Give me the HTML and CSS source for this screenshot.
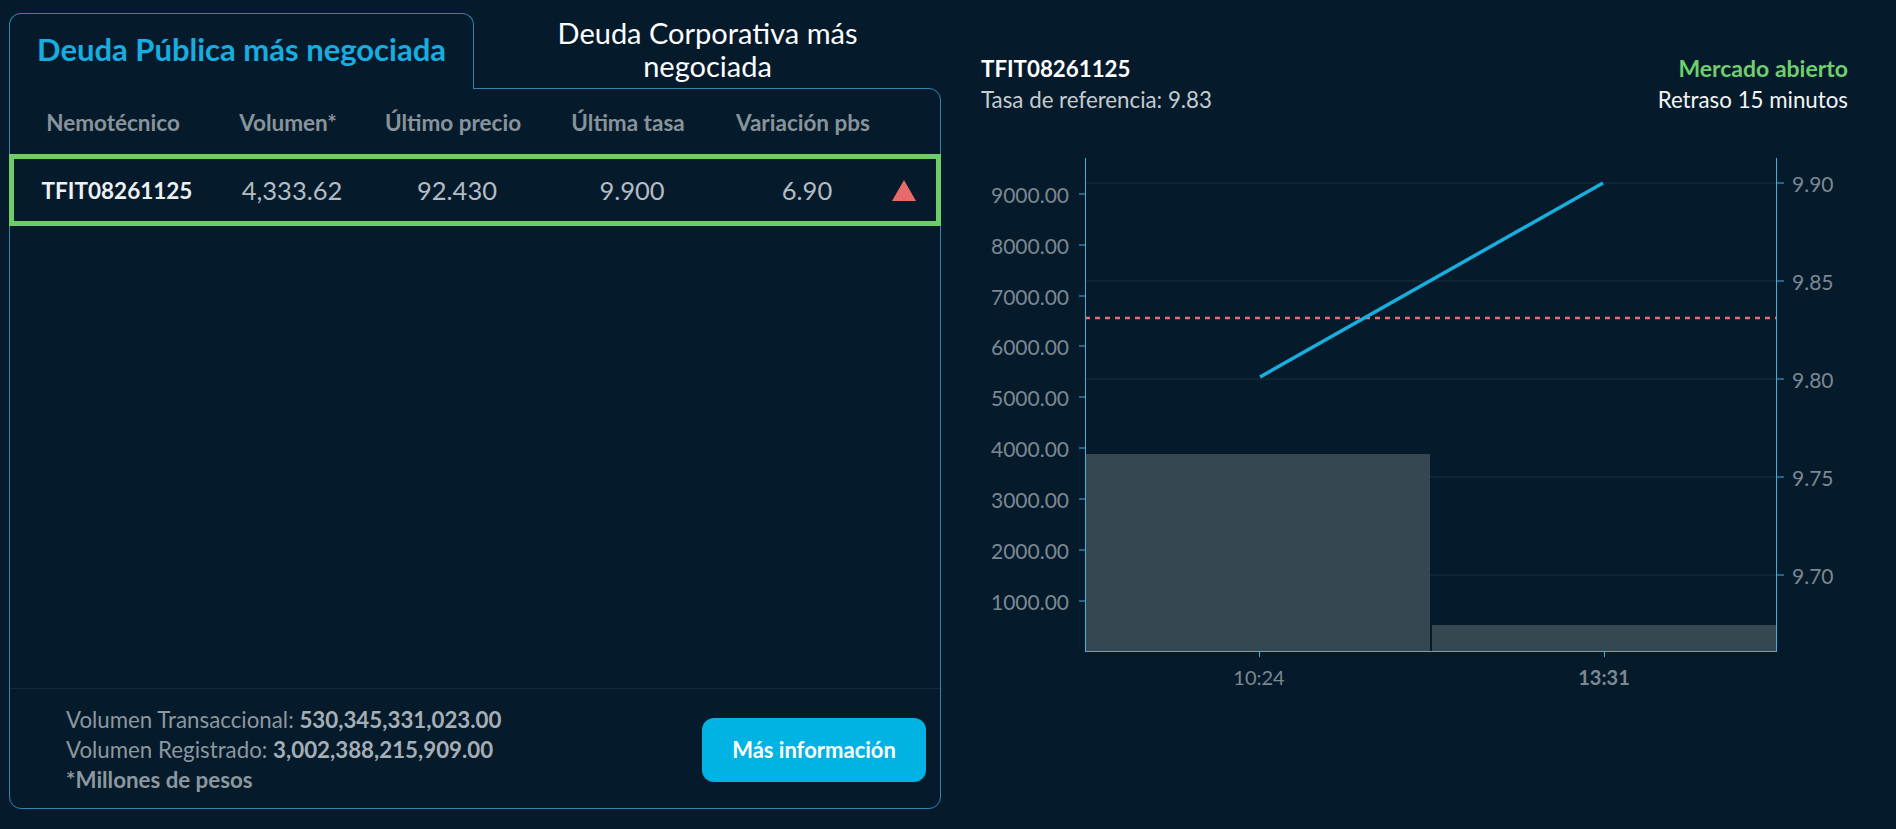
FILE: index.html
```html
<!DOCTYPE html>
<html lang="es">
<head>
<meta charset="utf-8">
<title>Deuda más negociada</title>
<link rel="stylesheet" href="styles.css">
</head>
<body>
<div class="page">
  <section class="panel">
    <div class="tabs">
      <div class="tab tab-active">Deuda Pública más negociada</div>
      <div class="tab tab-inactive">Deuda Corporativa más<br>negociada</div>
    </div>
    <div class="panel-body">
      <div class="grid head">
        <div>Nemotécnico</div>
        <div>Volumen*</div>
        <div>Último precio</div>
        <div>Última tasa</div>
        <div>Variación pbs</div>
        <div></div>
      </div>
      <div class="grid row selected">
        <div class="code">TFIT08261125</div>
        <div>4,333.62</div>
        <div>92.430</div>
        <div>9.900</div>
        <div>6.90</div>
        <div class="trend"><span class="tri-up"></span></div>
      </div>
      <div class="spacer"></div>
      <div class="footer">
        <div class="totals">
          <div>Volumen Transaccional: <b>530,345,331,023.00</b></div>
          <div>Volumen Registrado: <b>3,002,388,215,909.00</b></div>
          <div class="note">*Millones de pesos</div>
        </div>
        <button class="btn">Más información</button>
      </div>
    </div>
  </section>

  <section class="detail">
    <div class="detail-head">
      <div>
        <div class="d-code">TFIT08261125</div>
        <div class="d-ref">Tasa de referencia: 9.83</div>
      </div>
      <div class="d-right">
        <div class="d-open">Mercado abierto</div>
        <div class="d-delay">Retraso 15 minutos</div>
      </div>
    </div>
    <svg class="chart" width="867" height="560" viewBox="0 0 867 560">
      <g class="grid-lines">
        <line x1="104" y1="44" x2="796" y2="44"/>
        <line x1="104" y1="142" x2="796" y2="142"/>
        <line x1="104" y1="240" x2="796" y2="240"/>
        <line x1="104" y1="338" x2="796" y2="338"/>
        <line x1="104" y1="436" x2="796" y2="436"/>
      </g>
      <rect class="bar" x="104" y="315" width="345" height="197"/>
      <rect class="bar" x="451" y="486" width="345" height="26"/>
      <line class="ref" x1="104" y1="179" x2="796" y2="179"/>
      <line class="rate" x1="279" y1="238" x2="622" y2="44"/>
      <g class="axis">
        <line x1="104.5" y1="19" x2="104.5" y2="512"/>
        <line x1="795.5" y1="19" x2="795.5" y2="512"/>
        <line x1="104" y1="512.5" x2="796" y2="512.5"/>
        <line x1="98" y1="55" x2="104" y2="55"/>
        <line x1="98" y1="106" x2="104" y2="106"/>
        <line x1="98" y1="157" x2="104" y2="157"/>
        <line x1="98" y1="207" x2="104" y2="207"/>
        <line x1="98" y1="258" x2="104" y2="258"/>
        <line x1="98" y1="309" x2="104" y2="309"/>
        <line x1="98" y1="360" x2="104" y2="360"/>
        <line x1="98" y1="411" x2="104" y2="411"/>
        <line x1="98" y1="462" x2="104" y2="462"/>
        <line x1="796" y1="44" x2="803" y2="44"/>
        <line x1="796" y1="142" x2="803" y2="142"/>
        <line x1="796" y1="240" x2="803" y2="240"/>
        <line x1="796" y1="338" x2="803" y2="338"/>
        <line x1="796" y1="436" x2="803" y2="436"/>
        <line x1="278.5" y1="512" x2="278.5" y2="518"/>
        <line x1="623.5" y1="512" x2="623.5" y2="518"/>
      </g>
      <g class="ylabels">
        <text x="88" y="55">9000.00</text>
        <text x="88" y="106">8000.00</text>
        <text x="88" y="157">7000.00</text>
        <text x="88" y="207">6000.00</text>
        <text x="88" y="258">5000.00</text>
        <text x="88" y="309">4000.00</text>
        <text x="88" y="360">3000.00</text>
        <text x="88" y="411">2000.00</text>
        <text x="88" y="462">1000.00</text>
      </g>
      <g class="rlabels">
        <text x="811" y="44">9.90</text>
        <text x="811" y="142">9.85</text>
        <text x="811" y="240">9.80</text>
        <text x="811" y="338">9.75</text>
        <text x="811" y="436">9.70</text>
      </g>
      <g class="xlabels">
        <text x="278" y="538">10:24</text>
        <text class="xbold" x="623" y="538">13:31</text>
      </g>
    </svg>
  </section>
</div>
</body>
</html>
```
FILE: styles.css
```css
* { box-sizing: border-box; }
html, body {
  margin: 0;
  background: #051b2b;
}
body {
  font-family: "Lato", "Noto Sans", "Liberation Sans", sans-serif;
  color: #e9edf0;
}
.page {
  display: flex;
  align-items: flex-start;
  gap: 40px;
  padding: 13px 0 0 9px;
}

/* ---------- left panel ---------- */
.panel {
  width: 932px;
  height: 796px;
  display: flex;
  flex-direction: column;
}
.tabs {
  display: flex;
  height: 75px;
}
.tab {
  display: flex;
  align-items: center;
  justify-content: center;
}
.tab-active {
  width: 465px;
  border: 1px solid #2f86b3;
  border-bottom: none;
  border-radius: 12px 12px 0 0;
  background: #051b2b;
  color: #18ade0;
  font-size: 31px;
  font-weight: 700;
  position: relative;
  z-index: 1;
  margin-bottom: -1px;
  padding-bottom: 6px;
}
.tab-inactive {
  flex: 1;
  color: #ffffff;
  font-size: 29px;
  text-align: center;
  line-height: 33px;
  padding-bottom: 4px;
}
.panel-body {
  flex: 1;
  border: 1px solid #2f86b3;
  border-radius: 0 12px 12px 12px;
  display: flex;
  flex-direction: column;
}
.grid {
  display: grid;
  grid-template-columns: 206px 144px 186px 164px 186px 1fr;
  align-items: center;
  text-align: center;
}
.head {
  height: 65px;
  padding-top: 2px;
  font-size: 22.5px;
  font-weight: 700;
  color: #89939b;
}
.row {
  height: 72px;
  margin: 0 -1px;
  border: 5px solid #6dcd6b;
  font-size: 25.5px;
  color: #b3bcc3;
}
.row .code {
  font-weight: 700;
  font-size: 22.5px;
  color: #eef1f3;
}
.trend {
  display: flex;
  justify-content: flex-start;
}
.tri-up {
  width: 0;
  height: 0;
  border-left: 12px solid transparent;
  border-right: 12px solid transparent;
  border-bottom: 21px solid #e96a6a;
  margin-left: -8px;
}
.spacer { flex: 1; }
.footer {
  height: 120px;
  border-top: 1px solid #172a38;
  display: flex;
  align-items: center;
  justify-content: space-between;
  padding: 2px 14px 0 56px;
}
.totals {
  font-size: 22.3px;
  line-height: 30px;
  color: #8d979f;
}
.totals b {
  font-weight: 700;
  color: #a5aeb5;
}
.totals .note {
  font-weight: 700;
  color: #8d979f;
}
.btn {
  width: 224px;
  height: 64px;
  border: none;
  border-radius: 12px;
  background: #00b3e2;
  color: #ffffff;
  font-family: inherit;
  font-size: 22px;
  font-weight: 700;
}

/* ---------- right detail ---------- */
.detail {
  width: 867px;
  padding-top: 40px;
}
.detail-head {
  display: flex;
  justify-content: space-between;
  font-size: 22.3px;
  line-height: 31px;
}
.d-code {
  font-weight: 700;
  color: #ffffff;
}
.d-ref { color: #c5cbd0; }
.d-right { text-align: right; }
.d-open {
  font-weight: 700;
  color: #6fcf6c;
  font-size: 23px;
}
.d-delay { color: #f2f4f5; }
.chart {
  display: block;
  margin-top: 24px;
}
.grid-lines line {
  stroke: #16303f;
  stroke-width: 1;
}
.bar { fill: #364751; }
.ref {
  stroke: #e47070;
  stroke-width: 2.5;
  stroke-dasharray: 5 5;
}
.rate {
  stroke: #19aede;
  stroke-width: 3.5;
}
.axis line {
  stroke: #45aee3;
  stroke-width: 1;
}
.chart text {
  font-family: "Lato", "Noto Sans", "Liberation Sans", sans-serif;
  font-size: 21px;
  fill: #7c8892;
  dominant-baseline: central;
}
.ylabels text { text-anchor: end; }
.rlabels text { text-anchor: start; }
.xlabels text {
  text-anchor: middle;
  font-size: 20px;
}
.xlabels .xbold { font-weight: 700; }
```
